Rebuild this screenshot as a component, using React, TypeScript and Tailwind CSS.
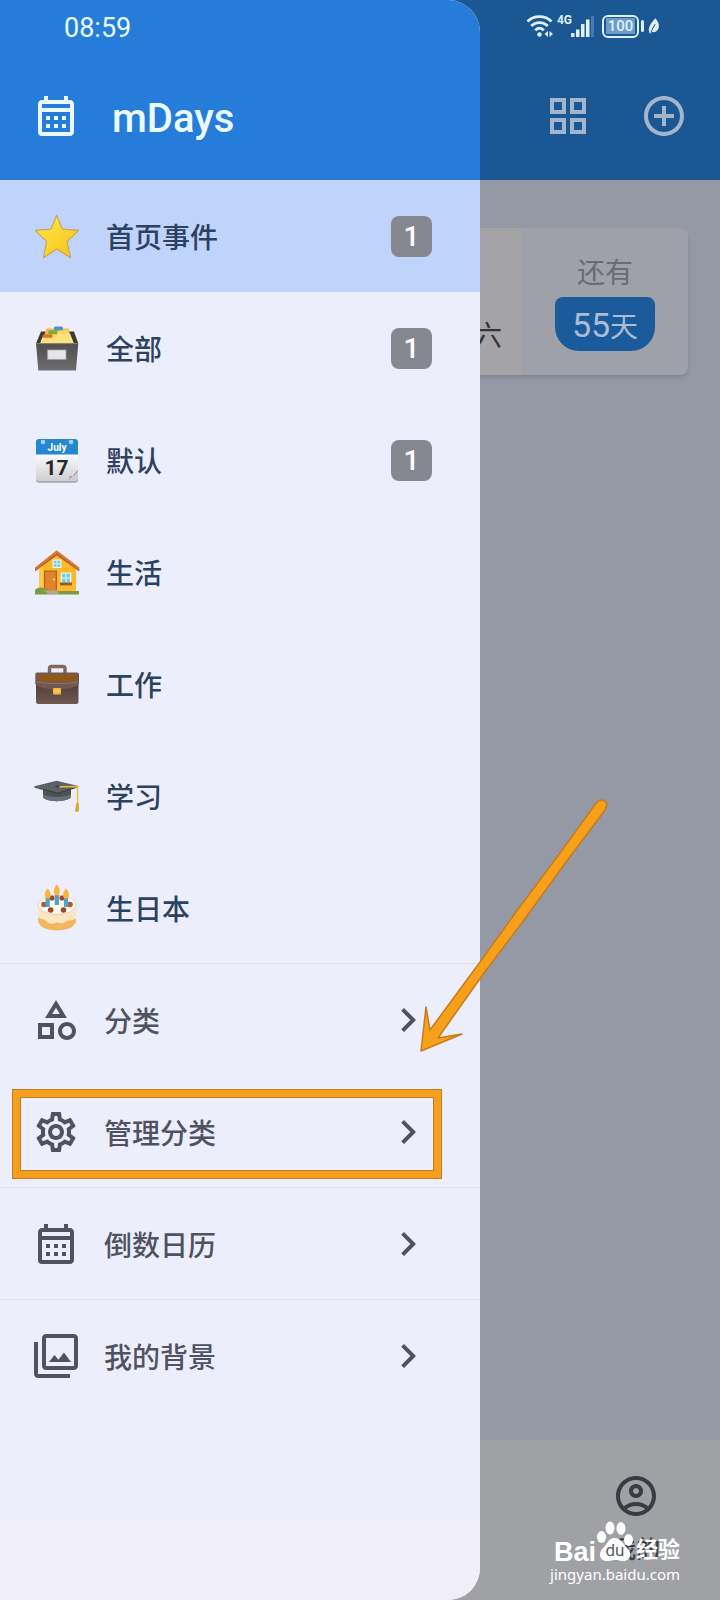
import type { ReactNode } from 'react';
import {
  MdAddCircleOutline,
  MdChevronRight,
  MdOutlineAccountCircle,
  MdOutlineCalendarMonth,
  MdOutlineCategory,
  MdOutlineFilter,
  MdOutlineGridView,
  MdOutlineSettings,
} from 'react-icons/md';

interface Category {
  label: string;
  icon: ReactNode;
  count?: number;
  active?: boolean;
  divider?: boolean;
}

interface MenuLink {
  label: string;
  icon: ReactNode;
  divider?: boolean;
  marked?: boolean;
}

function StarIcon() {
  return (
    <svg viewBox="0 0 48 48" className="h-12 w-12 shrink-0" aria-hidden="true">
      <defs>
        <linearGradient id="star" x1="0" y1="0" x2="1" y2="1">
          <stop offset="0" stopColor="#fdea45" />
          <stop offset="1" stopColor="#f8c01c" />
        </linearGradient>
      </defs>
      <path
        d="M24.7 3.2 30.4 17.2 46.6 18.4 35 29.6 38.6 45.8 24.7 37 11.4 45.8 14.6 29.6 3.4 18.4 19 17.2Z"
        fill="url(#star)"
        stroke="#c9a94c"
        strokeWidth="1.2"
        strokeLinejoin="round"
      />
    </svg>
  );
}

function FileBoxIcon() {
  return (
    <svg viewBox="0 0 48 48" className="h-12 w-12 shrink-0" aria-hidden="true">
      <defs>
        <linearGradient id="box" x1="0" y1="0" x2="0" y2="1">
          <stop offset="0" stopColor="#4f4f51" />
          <stop offset="1" stopColor="#6d6d6f" />
        </linearGradient>
      </defs>
      <path d="M4 19.5 9 7.5H42L46.3 19.5Z" fill="#3e3a33" />
      <path d="M12 12 14.5 4.5H36.5L40 19.5H10Z" fill="#f5b942" />
      <rect x="22" y="2.5" width="9" height="4" rx="1.5" fill="#4a93d6" />
      <path d="M19 8 36 5.5 40 19.5H16Z" fill="#fbd665" />
      <rect x="16.3" y="6.2" width="9" height="4" rx="1.5" fill="#7cab35" />
      <path d="M8 19.5 10.5 13 24 13 26 9.5H38L42 19.5Z" fill="#fde17a" />
      <rect x="10.5" y="10.2" width="10" height="3.6" rx="1.5" fill="#d9722a" />
      <path d="M4 19.2H46.3L44 46.5H6.3Z" fill="url(#box)" />
      <path d="M4.5 19.6H46" stroke="#8a8a8c" strokeWidth="0.8" />
      <rect x="15.7" y="26" width="18.3" height="9.3" fill="#e6e6e9" stroke="#a9a9ad" strokeWidth="0.8" />
    </svg>
  );
}

function CalendarPageIcon() {
  return (
    <svg viewBox="0 0 48 48" className="h-12 w-12 shrink-0" aria-hidden="true">
      <defs>
        <linearGradient id="page" x1="0" y1="0" x2="0" y2="1">
          <stop offset="0" stopColor="#fbfbfb" />
          <stop offset="1" stopColor="#cfcfd2" />
        </linearGradient>
      </defs>
      <rect x="4" y="4" width="42" height="42.7" rx="3" fill="#a9a9ad" />
      <path d="M4 18H46V34L36 45H7a3 3 0 0 1-3-3Z" fill="url(#page)" />
      <path d="M36 45c1-1 2-3 1.500-5 3 .5 7-1 8.500-6v8a3 3 0 0 1-3 3Z" fill="#cfcfd3" />
      <path d="M36 45c1-1 2-3 1.500-5 3 .5 7-1 8.500-6Z" fill="#9c9ca1" />
      <path d="M4 18.500V6a3 3 0 0 1 3-3H43a3 3 0 0 1 3 3V18.500Z" fill="#2388cf" />
      <circle cx="11" cy="6" r="2.300" fill="#a9d0ec" />
      <circle cx="39" cy="6" r="2.300" fill="#a9d0ec" />
      <text x="25" y="14.500" textAnchor="middle" fontSize="10" fontWeight="700" fontFamily="Roboto, sans-serif" fill="#fff">
        July
      </text>
      <text x="24.500" y="39" textAnchor="middle" fontSize="21" fontWeight="700" fontFamily="Roboto, sans-serif" fill="#27272a">
        17
      </text>
    </svg>
  );
}

function HouseIcon() {
  return (
    <svg viewBox="0 0 48 48" className="h-12 w-12 shrink-0" aria-hidden="true">
      <path d="M7 20 24.7 5 44 20V44H7Z" fill="#fbb829" />
      <path d="M7 20V44H11V18Z" fill="#fdc94f" />
      <path d="M24.700 2.500 3 19.800V23.500L24.700 7.500 47.300 23.500V19.800Z" fill="#b9622a" />
      <path d="M24.700 2.500 3 19.800 4 21.500 24.700 5 46.300 21.500 47.300 19.800Z" fill="#d97a38" />
      <rect x="20.500" y="11.500" width="9" height="8.500" fill="#f1f6ee" />
      <rect x="21.700" y="12.700" width="6.600" height="6.200" fill="#6fd0dd" />
      <path d="M25 12V20M21 15.800H29" stroke="#f1f6ee" strokeWidth="0.9" />
      <rect x="12" y="22.500" width="13" height="20" fill="#b5651d" />
      <rect x="13.300" y="23.800" width="10.400" height="18.500" fill="#e2852a" />
      <circle cx="22" cy="31.500" r="0.900" fill="#ffe7a0" />
      <rect x="28.700" y="24.500" width="10.600" height="11" fill="#f1f6ee" />
      <rect x="30" y="25.600" width="8" height="9" fill="#6fd0dd" />
      <path d="M34 25V35M29 30H39" stroke="#f1f6ee" strokeWidth="1" />
      <rect x="28" y="34.500" width="12" height="2.800" fill="#9c5426" />
      <path d="M3 46.500V42c3-3 7-3 9-1.500 3-.5 4 1 5 2.500H47V46.500Z" fill="#7d9b43" />
      <path d="M12 42.500H25L27 46H16Z" fill="#b5a68f" />
    </svg>
  );
}

function BriefcaseIcon() {
  return (
    <svg viewBox="0 0 48 48" className="h-12 w-12 shrink-0" aria-hidden="true">
      <defs>
        <linearGradient id="case" x1="0" y1="0" x2="0" y2="1">
          <stop offset="0" stopColor="#4b3631" />
          <stop offset="1" stopColor="#6f5952" />
        </linearGradient>
      </defs>
      <path d="M17.500 13.500V8.500a2 2 0 0 1 2-2H31a2 2 0 0 1 2 2v5" fill="none" stroke="#7d6a67" strokeWidth="3.400" />
      <rect x="4" y="18" width="42.500" height="26" rx="2.500" fill="url(#case)" />
      <path d="M5.500 12.500H45a2 2 0 0 1 2 2V24c-2 3-12 5.500-22 5.500S5.300 27 3.300 24V14.500a2 2 0 0 1 2.200-2Z" fill="#71594f" />
      <path d="M6 14.500H44.500V20.500c-8 1.500-30 1.500-38.500 0Z" fill="#8e5a17" />
      <path d="M4.500 22c12 2 30 2 41.500 0" fill="none" stroke="#927a70" strokeWidth="0.8" />
      <rect x="21" y="28" width="8" height="6.500" rx="1" fill="#f4b83b" />
      <path d="M22 31H28" stroke="#fbdc84" strokeWidth="1" />
    </svg>
  );
}

function GraduationIcon() {
  return (
    <svg viewBox="0 0 48 48" className="h-12 w-12 shrink-0" aria-hidden="true">
      <path d="M11 16V25c2 5.500 25 5.500 28 0V16Z" fill="#4c5357" />
      <path d="M11 22V25c2 5.500 25 5.500 28 0V22c-4 4-24 4-28 0Z" fill="#687075" />
      <path d="M2.300 14.300 24.700 8.700 46.300 14 25.500 20.800Z" fill="#5b6265" />
      <path d="M2.300 14.300 25.500 20.800 46.300 14V15.300L25.500 22.300 2.300 15.600Z" fill="#3b4144" />
      <path d="M27 14.800 45.500 14.500V32" fill="none" stroke="#e6bd3e" strokeWidth="1.500" />
      <path d="M44.300 31H46.800L47 39c-1 1.500-3 1.500-4 0Z" fill="#dba92f" />
      <ellipse cx="25.500" cy="14.500" rx="2.500" ry="1" fill="#3b4144" />
    </svg>
  );
}

function CakeIcon() {
  return (
    <svg viewBox="0 0 48 48" className="h-12 w-12 shrink-0" aria-hidden="true">
      <path d="M6 21V36c0 14 38 14 38 0V21Z" fill="#f3b65f" />
      <path d="M6 21V33c3 3 5 1 8 4s6 4 9 2 6 2 10-1 6 0 11-4V21Z" fill="#fce6c4" />
      <ellipse cx="25" cy="21" rx="19" ry="9.500" fill="#fffaf0" stroke="#f0c793" strokeWidth="0.8" />
      <circle cx="12" cy="20.500" r="2.800" fill="#b0563f" />
      <circle cx="38" cy="20.500" r="2.800" fill="#b0563f" />
      <circle cx="18.700" cy="26" r="2.800" fill="#9c4a28" />
      <circle cx="31.500" cy="26" r="2.800" fill="#9c4a28" />
      <circle cx="20" cy="14" r="2.600" fill="#9c4a28" />
      <circle cx="30" cy="14" r="2.600" fill="#9c4a28" />
      <path d="M15.700 14V23M24.800 10.500V21M34 14V23" stroke="#4fa3c4" strokeWidth="4.200" />
      <path d="M15.700 4.500c4 4 4 10 0 10s-4-6 0-10ZM24.800 0.500c4 4 4 11 0 11s-4-7 0-11ZM34 4.500c4 4 4 10 0 10s-4-6 0-10Z" fill="#f6b73c" />
    </svg>
  );
}

const categories: Category[] = [
  { label: '首页事件', icon: <StarIcon />, count: 1, active: true },
  { label: '全部', icon: <FileBoxIcon />, count: 1 },
  { label: '默认', icon: <CalendarPageIcon />, count: 1 },
  { label: '生活', icon: <HouseIcon /> },
  { label: '工作', icon: <BriefcaseIcon /> },
  { label: '学习', icon: <GraduationIcon /> },
  { label: '生日本', icon: <CakeIcon />, divider: true },
];

const links: MenuLink[] = [
  { label: '分类', icon: <MdOutlineCategory className="h-12 w-12 shrink-0" /> },
  { label: '管理分类', icon: <MdOutlineSettings className="h-12 w-12 shrink-0" />, divider: true, marked: true },
  { label: '倒数日历', icon: <MdOutlineCalendarMonth className="h-12 w-12 shrink-0" />, divider: true },
  { label: '我的背景', icon: <MdOutlineFilter className="h-12 w-12 shrink-0" /> },
];

function StatusIcons() {
  return (
    <div className="flex h-[52px] items-center justify-end pr-[60px] text-[#dff1fd]">
      <svg viewBox="0 0 28 24" className="h-6 w-7" aria-hidden="true">
        <g fill="none" stroke="currentColor" strokeWidth="2.800">
          <path d="M1.500 7.500C8 1 19 1 25.500 7.500" />
          <path d="M5.300 12C9.500 7.500 17.500 7.500 21.700 12" />
          <path d="M9.300 16.300C11.500 13.500 15.500 13.500 17.700 16.300" />
        </g>
        <circle cx="13.500" cy="20.500" r="2.200" fill="currentColor" />
        <path d="M22 17V23L18.500 20ZM23.500 17V23L27 20Z" fill="currentColor" />
      </svg>
      <span className="ml-[3px] self-start pt-[12px] text-[12px] leading-4 font-bold">4G</span>
      <svg viewBox="0 0 24 24" className="-ml-0.5 h-6 w-6" aria-hidden="true">
        <path d="M1 19h3.500v4H1ZM6 15.500h3.500V23H6ZM11 10h3.500V23H11ZM16 5.500h3.500V23H16Z" fill="currentColor" />
        <path d="M21 2H24V23h-3Z" fill="#477bb0" />
      </svg>
      <div className="ml-2 flex h-[23px] w-[37px] items-center justify-center rounded-md border-2 border-current">
        <span className="bg-[#6e9bc8] px-0.5 text-[15px] leading-4 font-medium">100</span>
      </div>
      <span className="ml-0.5 h-3 w-[3px] rounded-sm bg-current" />
      <svg viewBox="0 0 14 20" className="ml-1 h-[18px] w-3" aria-hidden="true">
        <path d="M8.500 1C13 6 14 11 11 15c-1.500 2-4 2.500-6.500 2l-1.500 2.500L1.500 18C0 12 2 8.500 8.500 1Z" fill="currentColor" />
        <path d="M3 19C4.500 14 6 11 8.500 8" fill="none" stroke="#1a5793" strokeWidth="1.200" />
      </svg>
    </div>
  );
}

function HomeScreen() {
  return (
    <div className="flex min-h-screen flex-col bg-[#9499a5]">
      <header className="flex h-[180px] flex-col bg-[#1a5793]">
        <StatusIcons />
        <div className="flex flex-1 items-center justify-end gap-12 pr-8 text-[#a3b4cd]">
          <button type="button" aria-label="Grid view">
            <MdOutlineGridView className="h-12 w-12" />
          </button>
          <button type="button" aria-label="Add">
            <MdAddCircleOutline className="h-12 w-12" />
          </button>
        </div>
      </header>

      <main className="flex-1 px-8 pt-12">
        <article className="flex h-[147px] overflow-hidden rounded-lg bg-[#9fa1aa] shadow-md">
          <div className="flex flex-1 items-end justify-end bg-[#a4a4a6] pr-5 pb-[18px] text-[28px] leading-10 text-[#33333c]">六</div>
          <div className="flex w-[166px] flex-col items-center pt-[26px]">
            <span className="text-[28px] leading-10 text-[#6a6c75]">还有</span>
            <span className="mt-[3px] flex h-[54px] w-[100px] items-baseline justify-center rounded-t-lg rounded-b-3xl bg-[#1b5a9b] text-[28px] leading-[56px] text-[#a9bdd6]">
              <span className="text-[34px]">55</span>天
            </span>
          </div>
        </article>
      </main>

      <nav className="flex h-[160px] justify-end bg-[#a0a1a5] pr-9 text-[#3a3b44]">
        <button type="button" className="flex w-24 flex-col items-center pt-8">
          <MdOutlineAccountCircle className="h-12 w-12" />
          <span className="mt-3 text-[24px] leading-9 font-medium">我的</span>
        </button>
      </nav>
    </div>
  );
}

function CategoryRow({ label, icon, count, active, divider }: Category) {
  return (
    <button
      type="button"
      className={`flex h-28 w-full items-center gap-[26px] pr-12 pl-8 text-left text-[28px] font-medium text-[#2d4160] ${active ? 'bg-[#c0d3fa]' : ''} ${divider ? 'border-b border-[#dcdfeb]' : ''}`}
    >
      {icon}
      <span className="flex-1 pt-1.5">{label}</span>
      {count !== undefined && (
        <span className="flex h-[41px] w-[41px] items-center justify-center rounded-lg bg-[#858890] pt-0.5 text-[28px] leading-none text-white">
          {count}
        </span>
      )}
    </button>
  );
}

function LinkRow({ label, icon, divider, marked }: MenuLink) {
  return (
    <button
      type="button"
      className={`relative flex h-28 w-full items-center gap-6 pr-12 pl-8 text-left text-[28px] font-medium text-[#50535f] ${divider ? 'border-b border-[#dcdfeb]' : ''}`}
    >
      {icon}
      <span className="flex-1 pt-1.5">{label}</span>
      <MdChevronRight className="h-12 w-12 shrink-0" />
      {marked && (
        <span className="absolute top-[13px] right-[38px] bottom-2 left-3 border border-[#c87a1f]">
          <span className="block h-full border-[7px] border-[#f59f1e]">
            <span className="block h-full border border-[#c87a1f]" />
          </span>
        </span>
      )}
    </button>
  );
}

function Drawer() {
  return (
    <aside className="absolute inset-y-0 left-0 flex w-2/3 flex-col overflow-hidden rounded-r-[32px] bg-[#eceffb]">
      <header className="flex h-[180px] flex-col bg-[#267dd9] text-[#e9fbff]">
        <time className="flex h-[52px] items-center pt-1 pl-16 text-[27px] leading-none">08:59</time>
        <div className="flex flex-1 items-center gap-8 pl-8">
          <MdOutlineCalendarMonth className="h-12 w-12" />
          <h1 className="pt-1.5 text-[40px] leading-none font-medium">mDays</h1>
        </div>
      </header>
      <div>
        {categories.map((category) => (
          <CategoryRow key={category.label} {...category} />
        ))}
      </div>
      <div>
        {links.map((link) => (
          <LinkRow key={link.label} {...link} />
        ))}
      </div>
      <div className="mt-auto h-20 bg-[#f0eff9]" />
    </aside>
  );
}

function PointerArrow() {
  return (
    <svg viewBox="0 0 200 260" className="pointer-events-none absolute top-[796px] left-[414px] h-[260px] w-[200px]" aria-hidden="true">
      <path
        d="M7 255 12 211 16 234 66 166 105 112 146 57 183 6Q189 1 193 8L191 14 152 66 110 124 70 177 24 242 48 238Z"
        fill="#f9a01b"
        stroke="#c67c1c"
        strokeWidth="1.500"
        strokeLinejoin="round"
      />
    </svg>
  );
}

function Watermark() {
  return (
    <div className="pointer-events-none absolute right-10 bottom-4 flex flex-col items-end text-white">
      <div className="flex h-10 items-end">
        <span className="font-['Liberation_Sans'] text-[27px] leading-6 font-bold">Bai</span>
        <svg viewBox="0 0 38 42" className="mb-0.5 h-[42px] w-[38px]" aria-hidden="true">
          <ellipse cx="5.500" cy="17" rx="4.500" ry="6" fill="#fff" />
          <ellipse cx="14" cy="8" rx="4.500" ry="6.500" fill="#fff" />
          <ellipse cx="25" cy="8.500" rx="4.500" ry="6.500" fill="#fff" />
          <ellipse cx="32.500" cy="20" rx="4.500" ry="6" fill="#fff" />
          <path d="M18.500 18c-6 0-7 6-11.500 10-5 5-4 13 4 13 4 0 5-1 8-1s4 1 8 1c8 0 9-8 5-12-5-5-7-11-13.500-11Z" fill="#fff" />
          <text x="19" y="36" textAnchor="middle" fontSize="17" fontFamily="Roboto, sans-serif" fill="#5c5d64">
            du
          </text>
        </svg>
        <span className="pl-0.5 text-[22px] leading-7 font-bold">经验</span>
      </div>
      <span className="font-['Noto_Sans'] text-[15px] leading-5">jingyan.baidu.com</span>
    </div>
  );
}

export default function App() {
  return (
    <div className="relative min-h-screen overflow-hidden font-[Roboto,'Noto_Sans_CJK_SC',sans-serif]">
      <HomeScreen />
      <Drawer />
      <PointerArrow />
      <Watermark />
    </div>
  );
}
